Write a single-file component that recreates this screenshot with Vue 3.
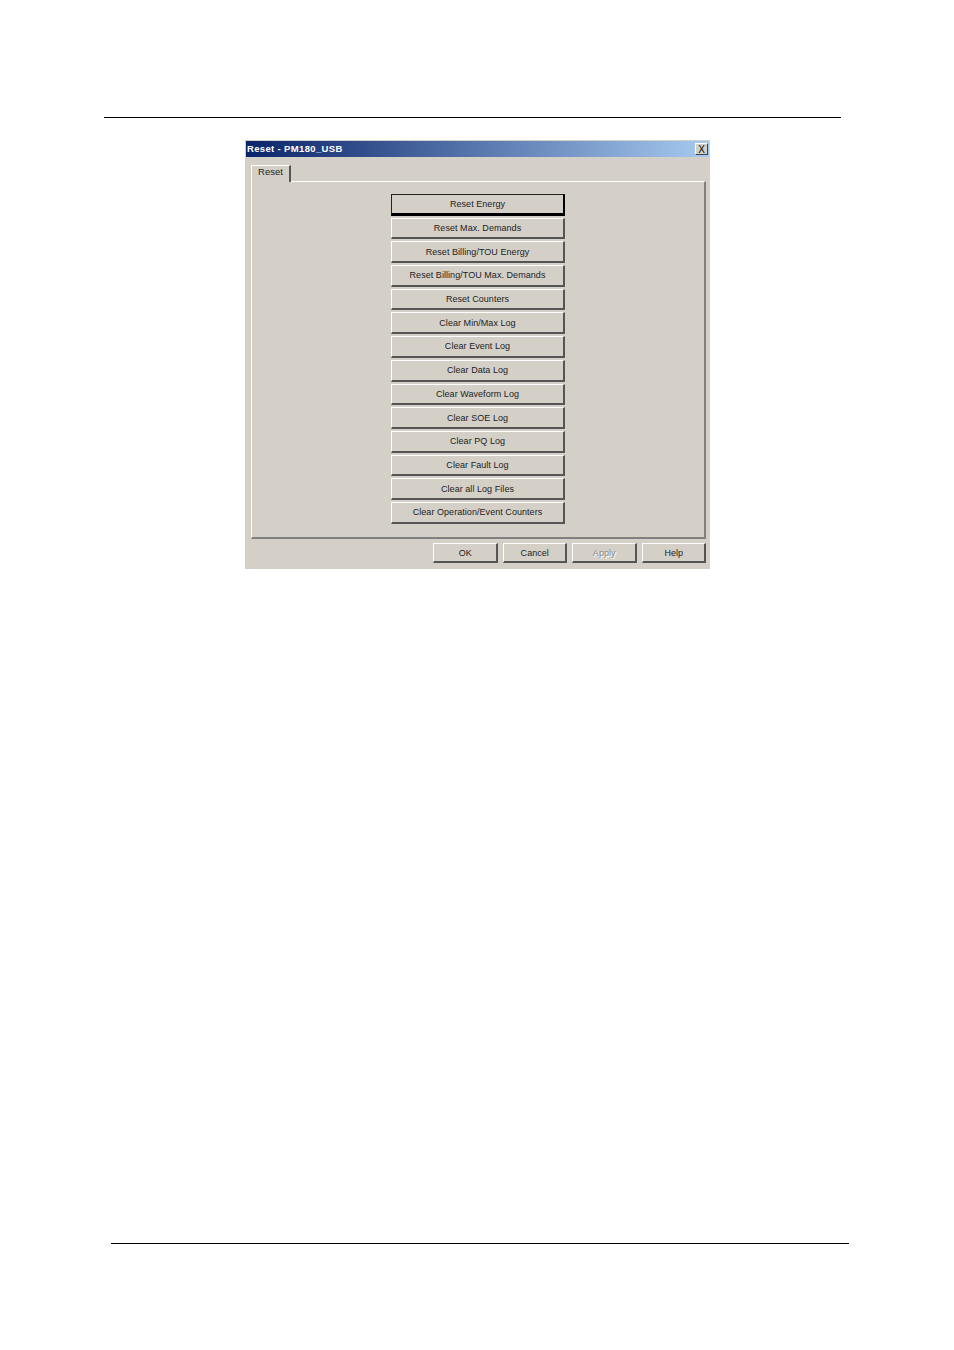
<script setup>
const resetButtons = [
  'Reset Energy',
  'Reset Max. Demands',
  'Reset Billing/TOU Energy',
  'Reset Billing/TOU Max. Demands',
  'Reset Counters',
  'Clear Min/Max Log',
  'Clear Event Log',
  'Clear Data Log',
  'Clear Waveform Log',
  'Clear SOE Log',
  'Clear PQ Log',
  'Clear Fault Log',
  'Clear all Log Files',
  'Clear Operation/Event Counters'
]

const footerButtons = ['OK', 'Cancel', 'Apply', 'Help']
</script>

<template>
  <div class="page">
    <div class="rule-top"></div>
    <div class="dialog">
      <div class="titlebar">
        <span class="title">Reset - PM180_USB</span>
        <button class="close">X</button>
      </div>
      <div class="tabs">
        <div class="tab">Reset</div>
      </div>
      <div class="panel">
        <button
          v-for="(label, i) in resetButtons"
          :key="label"
          class="btn reset-btn"
          :class="{ default: i === 0 }"
        >
          {{ label }}
        </button>
      </div>
      <div class="footer">
        <button
          v-for="label in footerButtons"
          :key="label"
          class="btn foot-btn"
          :class="{ disabled: label === 'Apply' }"
        >
          {{ label }}
        </button>
      </div>
    </div>
    <div class="rule-bottom"></div>
  </div>
</template>

<style>
html, body {
  margin: 0;
  background: #fff;
}
</style>

<style scoped>
.page {
  width: 954px;
  height: 1350px;
  padding-top: 117px;
  box-sizing: border-box;
  background: #fff;
  font-family: "Liberation Sans", Arial, sans-serif;
  overflow: hidden;
}

.rule-top {
  height: 1px;
  width: 737px;
  margin-left: 104px;
  background: #000;
}

.dialog {
  width: 465px;
  height: 429px;
  margin: 22px 0 0 245px;
  padding-top: 1px;
  box-sizing: border-box;
  background: #d4d0c8;
}

.titlebar {
  height: 16px;
  margin: 0 1px;
  display: flex;
  align-items: center;
  justify-content: space-between;
  padding: 0 1px;
  background: linear-gradient(90deg, #0a246a 0%, #a6caf0 100%);
}

.title {
  margin-top: -2px;
  color: #fff;
  font-size: 9.5px;
  font-weight: bold;
  letter-spacing: 0.35px;
}

.close {
  width: 13px;
  height: 12px;
  padding: 0;
  font-family: inherit;
  font-size: 10px;
  line-height: 9px;
  color: #000;
  background: #d4d0c8;
  border: 1px solid;
  border-color: #fff #404040 #404040 #fff;
}

.tabs {
  height: 24px;
  padding: 8px 0 0 6px;
  box-sizing: border-box;
  display: flex;
}

.tab {
  width: 40px;
  margin-bottom: -1px;
  box-sizing: border-box;
  text-align: center;
  font-size: 9.5px;
  line-height: 12px;
  color: #222;
  border-top: 1px solid #fff;
  border-left: 1px solid #fff;
  border-right: 2px solid #555;
  position: relative;
  z-index: 1;
  background: #d4d0c8;
}

.panel {
  width: 455px;
  height: 358px;
  margin-left: 6px;
  padding: 12px 0 0 139px;
  box-sizing: border-box;
  display: flex;
  flex-direction: column;
  gap: 2px;
  border-top: 1px solid #fff;
  border-left: 1px solid #fff;
  border-right: 2px solid #808080;
  border-bottom: 2px solid #808080;
}

.btn {
  padding: 0;
  font-family: inherit;
  font-size: 9px;
  letter-spacing: 0.05px;
  color: #222;
  background: #d4d0c8;
  border: 1px solid;
  border-color: #fff #555 #555 #fff;
  border-width: 1px 2px 2px 1px;
}

.reset-btn {
  width: 174px;
  height: 21.7px;
  flex: none;
}

.reset-btn.default {
  padding-top: 1px;
  border-color: #222 #000 #000 #222;
  border-width: 1px 2px 3px 1px;
}

.footer {
  display: flex;
  justify-content: flex-end;
  gap: 5px;
  padding: 4px 4px 0 0;
}

.foot-btn {
  width: 64.5px;
  height: 20px;
  padding-left: 1px;
}

.foot-btn.disabled {
  color: #888;
  text-shadow: 1px 1px 0 #fff;
}

.rule-bottom {
  height: 1px;
  width: 738px;
  margin: 674px 0 0 111px;
  background: #000;
}
</style>
